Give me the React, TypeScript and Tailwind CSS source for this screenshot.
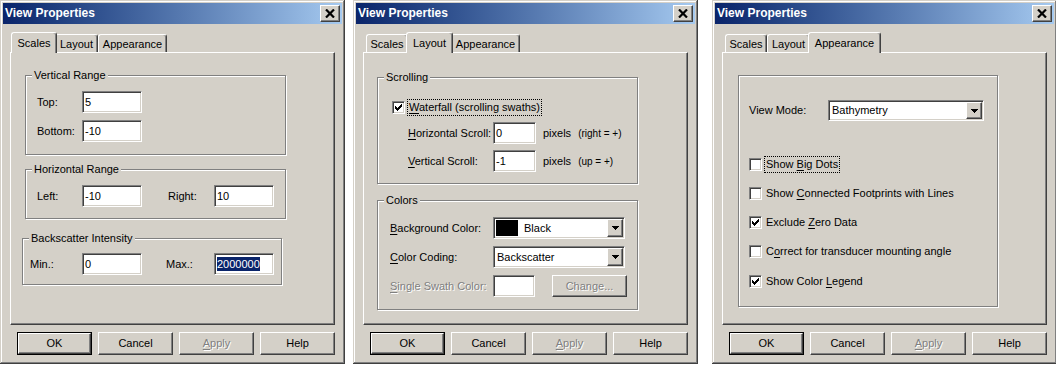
import React from "react";

const sunken =
  "border border-t-[#808080] border-l-[#808080] border-r-white border-b-white shadow-[inset_1px_1px_0_#404040,inset_-1px_-1px_0_#d4d0c8]";
const raised =
  "border border-t-white border-l-white border-r-[#404040] border-b-[#404040] shadow-[inset_-1px_-1px_0_#808080]";
const etched = "border border-[#808080] shadow-[inset_1px_1px_0_#fff,1px_1px_0_#fff]";
const disabledText = "text-[#808080] [text-shadow:1px_1px_0_#fff]";

function U({ children }: { children: React.ReactNode }) {
  return <span className="underline underline-offset-[2px]">{children}</span>;
}

function Group({
  label,
  className,
  children,
}: {
  label?: string;
  className: string;
  children: React.ReactNode;
}) {
  return (
    <div className={`relative ${etched} ${className}`}>
      {label && (
        <span className="absolute left-[6px] top-[-7px] bg-[#d4d0c8] px-[2px] leading-[13px]">{label}</span>
      )}
      {children}
    </div>
  );
}

function Edit({ value, className, selected }: { value: string; className: string; selected?: boolean }) {
  return (
    <div className={`${sunken} flex h-[22px] items-center bg-white pl-[2px] ${className}`}>
      {selected ? <span className="bg-[#0a246a] leading-[14px] text-white">{value}</span> : <span>{value}</span>}
    </div>
  );
}

function Check({ checked }: { checked?: boolean }) {
  const px = [
    [0, 2],
    [1, 3],
    [2, 4],
    [3, 3],
    [4, 2],
    [5, 1],
    [6, 0],
  ];
  return (
    <div className={`${sunken} flex h-[13px] w-[13px] shrink-0 items-center justify-center bg-white`}>
      {checked && (
        <svg width="7" height="7" viewBox="0 0 7 7" shapeRendering="crispEdges">
          {px.map(([x, y]) => (
            <rect key={x} x={x} y={y} width="1" height="3" fill="#000" />
          ))}
        </svg>
      )}
    </div>
  );
}

function Arrow() {
  return (
    <svg width="7" height="4" viewBox="0 0 7 4" shapeRendering="crispEdges">
      <path d="M0 0H7V1H6V2H5V3H4V4H3V3H2V2H1V1H0Z" fill="#000" />
    </svg>
  );
}

function Combo({ className, children }: { className: string; children: React.ReactNode }) {
  return (
    <div className={`${sunken} flex items-stretch bg-white p-[1px] ${className}`}>
      <div className="flex flex-1 items-center pl-[1px]">{children}</div>
      <div className={`${raised} flex w-[16px] items-center justify-center bg-[#d4d0c8]`}>
        <Arrow />
      </div>
    </div>
  );
}

function Btn({
  children,
  isDefault,
  disabled,
  className,
}: {
  children: React.ReactNode;
  isDefault?: boolean;
  disabled?: boolean;
  className: string;
}) {
  const inner = (
    <div
      className={`${raised} flex h-full w-full items-center justify-center bg-[#d4d0c8] ${disabled ? disabledText : ""}`}
    >
      {children}
    </div>
  );
  return isDefault ? (
    <div className={`border border-black ${className}`}>{inner}</div>
  ) : (
    <div className={className}>{inner}</div>
  );
}

function CloseGlyph() {
  return (
    <svg width="10" height="9" viewBox="0 0 10 9">
      <path d="M1 0.5L9 8.5M9 0.5L1 8.5" stroke="#000" strokeWidth="2.2" />
    </svg>
  );
}

const tabDefs = [
  { label: "Scales", w: "w-[42px]", wa: "w-[46px]" },
  { label: "Layout", w: "w-[43px]", wa: "w-[47px]" },
  { label: "Appearance", w: "w-[69px]", wa: "w-[73px]" },
];

function Tabs({ active }: { active: number }) {
  return (
    <div className="ml-[10px] mt-[8px] flex h-[20px] items-end">
      {tabDefs.map((t, i) =>
        i === active ? (
          <div
            key={i}
            className={`relative z-10 -mx-[2px] -mb-px flex h-[21px] justify-center rounded-t-[3px] border border-b-0 border-t-white border-l-white border-r-[#404040] bg-[#d4d0c8] pt-[4px] shadow-[inset_-1px_0_0_#808080] ${t.wa}`}
          >
            {t.label}
          </div>
        ) : (
          <div
            key={i}
            className={`flex h-[18px] justify-center rounded-t-[3px] border border-b-0 border-t-white border-l-white border-r-[#404040] pt-[3px] shadow-[inset_-1px_0_0_#808080] ${t.w}`}
          >
            {t.label}
          </div>
        )
      )}
    </div>
  );
}

function Dialog({ active, className, children }: { active: number; className: string; children: React.ReactNode }) {
  return (
    <div
      className={`flex h-[364px] w-[345px] shrink-0 flex-col bg-[#d4d0c8] p-[3px] shadow-[inset_-1px_-1px_0_#404040,inset_1px_1px_0_#d4d0c8,inset_-2px_-2px_0_#808080,inset_2px_2px_0_#fff] ${className}`}
    >
      <div className="flex h-[21px] items-center bg-linear-to-r from-[#0a246a] to-[#a6caf0] px-[2px]">
        <span className="flex-1 text-[12px] font-bold leading-[15px] text-white">View Properties</span>
        <div className={`${raised} flex h-[17px] w-[20px] items-center justify-center bg-[#d4d0c8]`}>
          <CloseGlyph />
        </div>
      </div>
      <Tabs active={active} />
      <div className="ml-[7px] h-[273px] w-[325px] border border-t-white border-l-white border-r-[#404040] border-b-[#404040] shadow-[inset_-1px_-1px_0_#808080]">
        {children}
      </div>
      <div className="ml-[14px] mt-[7px] flex gap-[6px]">
        <Btn isDefault className="h-[23px] w-[75px]">
          OK
        </Btn>
        <Btn className="h-[23px] w-[75px]">Cancel</Btn>
        <Btn disabled className="h-[23px] w-[75px]">
          <U>A</U>pply
        </Btn>
        <Btn className="h-[23px] w-[75px]">Help</Btn>
      </div>
    </div>
  );
}

function CheckRow({
  checked,
  focus,
  className,
  children,
}: {
  checked?: boolean;
  focus?: boolean;
  className: string;
  children: React.ReactNode;
}) {
  return (
    <div className={`flex h-[17px] items-center ${className}`}>
      <Check checked={checked} />
      <span
        className={`ml-[2px] border px-[1px] leading-[15px] ${focus ? "border-dotted border-black" : "border-transparent"}`}
      >
        {children}
      </span>
    </div>
  );
}

export default function App() {
  return (
    <div className="flex h-[365px] w-[1056px] bg-white font-['Liberation_Sans',Arial,sans-serif] text-[11px] leading-[13px] text-black">
      {/* Dialog 1: Scales */}
      <Dialog active={0} className="">
        <Group label="Vertical Range" className="ml-[14px] mt-[22px] h-[80px] w-[261px]">
          <div className="mt-[15px] flex h-[22px] items-center pl-[11px]">
            <span className="w-[45px]">Top:</span>
            <Edit value="5" className="w-[60px]" />
          </div>
          <div className="mt-[7px] flex h-[22px] items-center pl-[11px]">
            <span className="w-[45px]">Bottom:</span>
            <Edit value="-10" className="w-[60px]" />
          </div>
        </Group>
        <Group label="Horizontal Range" className="ml-[14px] mt-[14px] h-[50px] w-[261px]">
          <div className="mt-[15px] flex h-[22px] items-center pl-[11px]">
            <span className="w-[45px]">Left:</span>
            <Edit value="-10" className="w-[60px]" />
            <span className="ml-[26px] w-[46px]">Right:</span>
            <Edit value="10" className="w-[60px]" />
          </div>
        </Group>
        <Group label="Backscatter Intensity" className="ml-[11px] mt-[19px] h-[47px] w-[260px]">
          <div className="mt-[14px] flex h-[22px] items-center pl-[7px]">
            <span className="w-[52px]">Min.:</span>
            <Edit value="0" className="w-[60px]" />
            <span className="ml-[24px] w-[48px]">Max.:</span>
            <Edit value="2000000" selected className="w-[60px]" />
          </div>
        </Group>
      </Dialog>

      {/* Dialog 2: Layout */}
      <Dialog active={1} className="ml-[8px]">
        <Group label="Scrolling" className="ml-[13px] mt-[24px] h-[107px] w-[261px]">
          <CheckRow checked focus className="ml-[14px] mt-[21px]">
            <U>W</U>aterfall (scrolling swaths)
          </CheckRow>
          <div className="ml-[30px] mt-[6px] flex h-[22px] items-center">
            <span className="w-[85px]">
              <U>H</U>orizontal Scroll:
            </span>
            <Edit value="0" className="w-[43px]" />
            <span className="ml-[7px]">pixels</span>
            <span className="ml-[7px] text-[10px]">(right = +)</span>
          </div>
          <div className="ml-[30px] mt-[6px] flex h-[22px] items-center">
            <span className="w-[85px]">
              <U>V</U>ertical Scroll:
            </span>
            <Edit value="-1" className="w-[43px]" />
            <span className="ml-[7px]">pixels</span>
            <span className="ml-[7px] text-[10px]">(up = +)</span>
          </div>
        </Group>
        <Group label="Colors" className="ml-[13px] mt-[16px] h-[110px] w-[261px]">
          <div className="ml-[12px] mt-[16px] flex h-[22px] items-center">
            <span className="w-[103px]">
              <U>B</U>ackground Color:
            </span>
            <Combo className="h-[22px] w-[132px]">
              <span className="h-[16px] w-[22px] bg-black" />
              <span className="ml-[6px]">Black</span>
            </Combo>
          </div>
          <div className="ml-[12px] mt-[7px] flex h-[22px] items-center">
            <span className="w-[103px]">
              <U>C</U>olor Coding:
            </span>
            <Combo className="h-[22px] w-[132px]">
              <span className="ml-[1px]">Backscatter</span>
            </Combo>
          </div>
          <div className="ml-[12px] mt-[7px] flex h-[22px] items-center">
            <span className={`w-[103px] ${disabledText}`}>
              <U>S</U>ingle Swath Color:
            </span>
            <div className={`${sunken} h-[22px] w-[42px] bg-white`} />
            <Btn disabled className="ml-[17px] h-[22px] w-[75px]">
              Change...
            </Btn>
          </div>
        </Group>
      </Dialog>

      {/* Dialog 3: Appearance */}
      <Dialog active={2} className="ml-[14px]">
        <Group className="ml-[15px] mt-[22px] h-[232px] w-[260px]">
          <div className="ml-[10px] mt-[24px] flex h-[21px] items-center">
            <span className="w-[79px]">View Mode:</span>
            <Combo className="h-[21px] w-[156px]">
              <span className="ml-[1px]">Bathymetry</span>
            </Combo>
          </div>
          <CheckRow focus className="ml-[10px] mt-[35px]">
            Show <U>B</U>ig Dots
          </CheckRow>
          <CheckRow className="ml-[10px] mt-[12px]">
            Show <U>C</U>onnected Footprints with Lines
          </CheckRow>
          <CheckRow checked className="ml-[10px] mt-[12px]">
            Exclude <U>Z</U>ero Data
          </CheckRow>
          <CheckRow className="ml-[10px] mt-[12px]">
            C<U>o</U>rrect for transducer mounting angle
          </CheckRow>
          <CheckRow checked className="ml-[10px] mt-[13px]">
            Show Color <U>L</U>egend
          </CheckRow>
        </Group>
      </Dialog>
    </div>
  );
}
